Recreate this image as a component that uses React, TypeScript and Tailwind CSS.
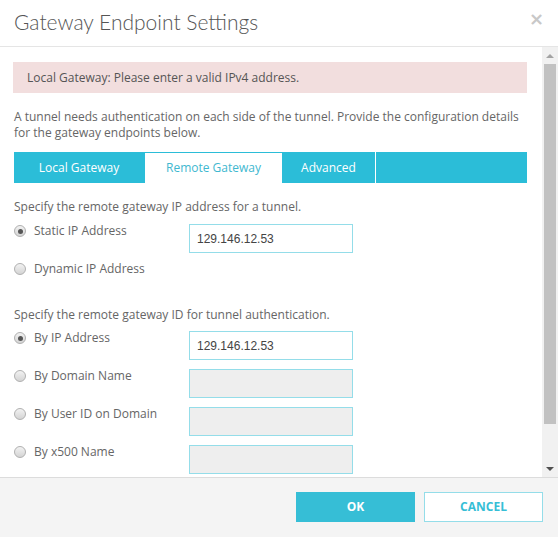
import type { FunctionComponent } from "react";

const cyan = "bg-[#2bbdd8]";

const Radio: FunctionComponent<{ checked?: boolean }> = ({ checked }) => {
  return (
    <span className="w-[12px] h-[12px] rounded-full border border-[#b0b0b0] bg-gradient-to-b from-[#f2f2f2] to-[#d4d4d4] flex items-center justify-center shrink-0">
      {checked && <span className="w-[5px] h-[5px] rounded-full bg-[#555]" />}
    </span>
  );
};

const FieldRow: FunctionComponent<{
  label: string;
  checked?: boolean;
  value?: string;
  disabled?: boolean;
  noInput?: boolean;
}> = ({ label, checked, value, disabled, noInput }) => {
  return (
    <div className="flex items-start h-[38px]">
      <div className="flex items-center gap-[8px] w-[176px] pl-px -mt-px">
        <Radio checked={checked} />
        <span className="text-[12px] text-[#666] leading-[16px]">{label}</span>
      </div>
      {!noInput && (
        <div
          className={`w-[164px] h-[29px] border border-[#94dde9] flex items-center px-[7px] text-[12px] text-[#444] font-['Liberation_Sans',Arial,sans-serif] ${
            disabled ? "bg-[#eeeeee]" : "bg-white"
          }`}
        >
          {value}
        </div>
      )}
    </div>
  );
};

const Scrollbar: FunctionComponent = () => {
  return (
    <div className="w-[16px] bg-[#f1f1f1] flex flex-col items-center shrink-0">
      <div className="h-[17px] flex items-center justify-center">
        <span className="w-0 h-0 border-l-[4px] border-r-[4px] border-b-[4px] border-l-transparent border-r-transparent border-b-[#a3a3a3]" />
      </div>
      <div className="w-[12px] h-[360px] bg-[#c1c1c1]" />
      <div className="flex-1" />
      <div className="h-[17px] flex items-center justify-center">
        <span className="w-0 h-0 border-l-[4px] border-r-[4px] border-t-[4px] border-l-transparent border-r-transparent border-t-[#505050]" />
      </div>
    </div>
  );
};

export default function App() {
  return (
    <div className="w-[558px] h-[537px] bg-white flex flex-col font-['Open_Sans',sans-serif] overflow-hidden">
      <div className="h-[47px] shrink-0 border-b border-[#e5e5e5] flex items-center justify-between pl-[14px] pr-[14px]">
        <h1 className="text-[21px] font-light text-[#555] leading-none -mt-[4px] font-['Lato',sans-serif]">
          Gateway Endpoint Settings
        </h1>
        <span className="text-[#c8c8c8] text-[18px] font-bold leading-none -mt-[8px] font-['DejaVu_Sans',sans-serif]">
          ×
        </span>
      </div>
      <div className="flex-1 flex min-h-0 border-b border-[#dcdcdc]">
        <div className="flex-1 overflow-hidden pl-[13px] pr-[15px] pt-[15px]">
          <div className="h-[31px] bg-[#f2dede] flex items-center pl-[14px] text-[12px] text-[#555]">
            Local Gateway: Please enter a valid IPv4 address.
          </div>
          <p className="mt-[16px] pl-px text-[12px] leading-[16px] text-[#666]">
            A tunnel needs authentication on each side of the tunnel. Provide the configuration details
            for the gateway endpoints below.
          </p>
          <div className={`mt-[11px] ml-px h-[31px] flex ${cyan}`}>
            <div className="w-[130px] flex items-center justify-center text-[12px] text-white">
              Local Gateway
            </div>
            <div className="w-[137px] ml-px bg-white border-t border-[#2bbdd8] flex items-center justify-center text-[12px] text-[#3fb8d0]">
              Remote Gateway
            </div>
            <div className="w-[94px] border-r border-white flex items-center justify-center text-[12px] text-white">
              Advanced
            </div>
          </div>
          <p className="mt-[16px] pl-px text-[12px] leading-[16px] text-[#666]">
            Specify the remote gateway IP address for a tunnel.
          </p>
          <div className="mt-[9px]">
            <FieldRow label="Static IP Address" checked value="129.146.12.53" />
            <FieldRow label="Dynamic IP Address" noInput />
          </div>
          <p className="mt-[7px] pl-px text-[12px] leading-[16px] text-[#666]">
            Specify the remote gateway ID for tunnel authentication.
          </p>
          <div className="mt-[8px]">
            <FieldRow label="By IP Address" checked value="129.146.12.53" />
            <FieldRow label="By Domain Name" disabled />
            <FieldRow label="By User ID on Domain" disabled />
            <FieldRow label="By x500 Name" disabled />
          </div>
        </div>
        <Scrollbar />
      </div>
      <div className="h-[59px] shrink-0 bg-[#f4f4f4] flex items-start justify-end gap-[9px] pt-[14px] pr-[15px]">
        <button className="w-[119px] h-[30px] bg-[#36bed6] text-white text-[12px] font-bold">OK</button>
        <button className="w-[119px] h-[30px] bg-white border border-[#94dde9] text-[#36bed6] text-[12px] font-bold">
          CANCEL
        </button>
      </div>
    </div>
  );
}
